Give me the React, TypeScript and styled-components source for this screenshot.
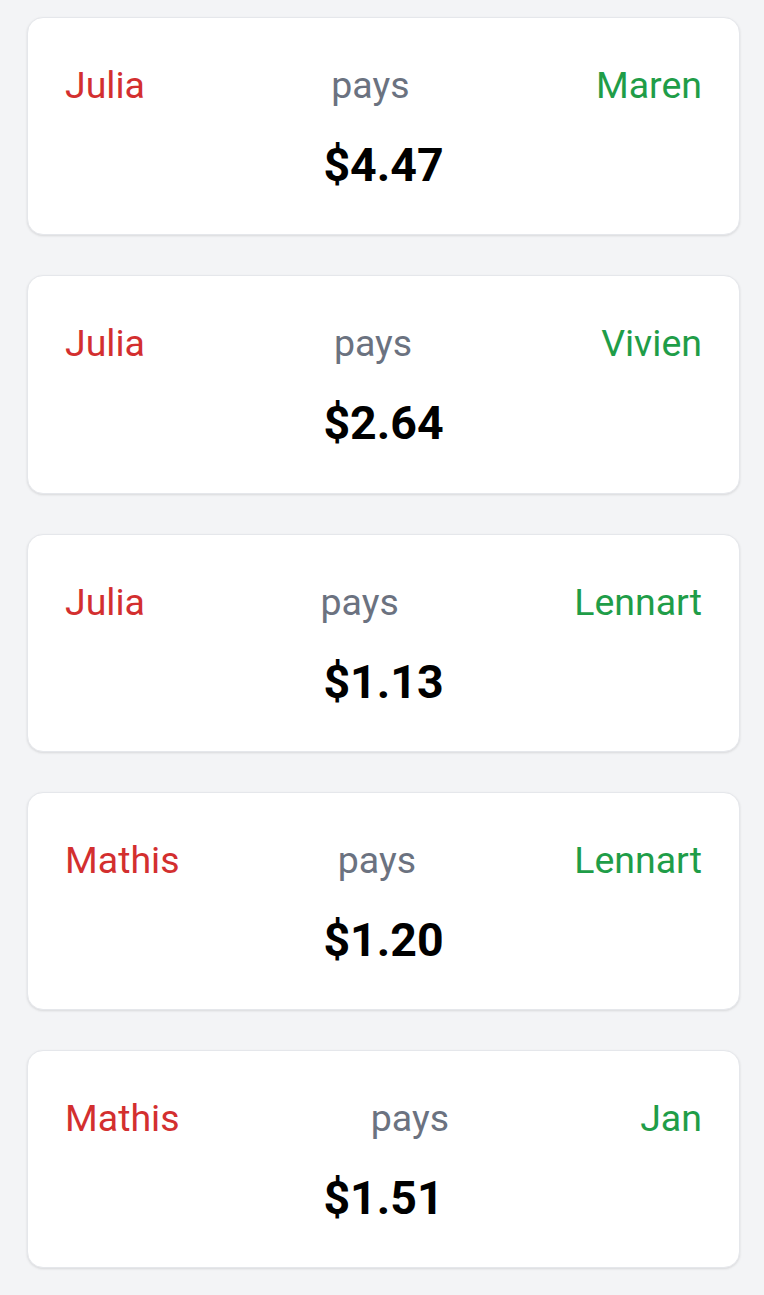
import React from "react";
import styled, { createGlobalStyle } from "styled-components";

const Global = createGlobalStyle`
  html, body { margin: 0; padding: 0; background: #f3f4f6; }
  body { font-family: Roboto, "Noto Sans", Arial, sans-serif; -webkit-font-smoothing: antialiased; }
`;

const List = styled.div`
  display: flex;
  flex-direction: column;
  gap: 40px;
  padding: 17px 24px 27px 27px;
`;

const Card = styled.div`
  background: #ffffff;
  border: 1px solid #e5e7eb;
  border-radius: 16px;
  box-shadow: 0 1px 3px rgba(0, 0, 0, 0.08), 0 1px 2px rgba(0, 0, 0, 0.04);
  padding: 39px 37px 37.25px 37px;
  display: flex;
  flex-direction: column;
  gap: 20px;
`;

const Row = styled.div`
  display: flex;
  justify-content: space-between;
  align-items: center;
`;

const Name = styled.span<{ $tone: "payer" | "payee" }>`
  font-size: 37.5px;
  line-height: 56px;
  color: ${(p) => (p.$tone === "payer" ? "#d32f2f" : "#1f9d48")};
`;

const Verb = styled.span`
  font-size: 37.5px;
  line-height: 56px;
  color: #6b7280;
`;

const Amount = styled.div`
  text-align: center;
  font-size: 46.5px;
  line-height: 64px;
  font-weight: 700;
  color: #000;
`;

const data = [
  { from: "Julia", to: "Maren", amount: "$4.47" },
  { from: "Julia", to: "Vivien", amount: "$2.64" },
  { from: "Julia", to: "Lennart", amount: "$1.13" },
  { from: "Mathis", to: "Lennart", amount: "$1.20" },
  { from: "Mathis", to: "Jan", amount: "$1.51" },
];

export default function App() {
  return (
    <>
      <Global />
      <List>
        {data.map((d, i) => (
          <Card key={i}>
            <Row>
              <Name $tone="payer">{d.from}</Name>
              <Verb>pays</Verb>
              <Name $tone="payee">{d.to}</Name>
            </Row>
            <Amount>{d.amount}</Amount>
          </Card>
        ))}
      </List>
    </>
  );
}
